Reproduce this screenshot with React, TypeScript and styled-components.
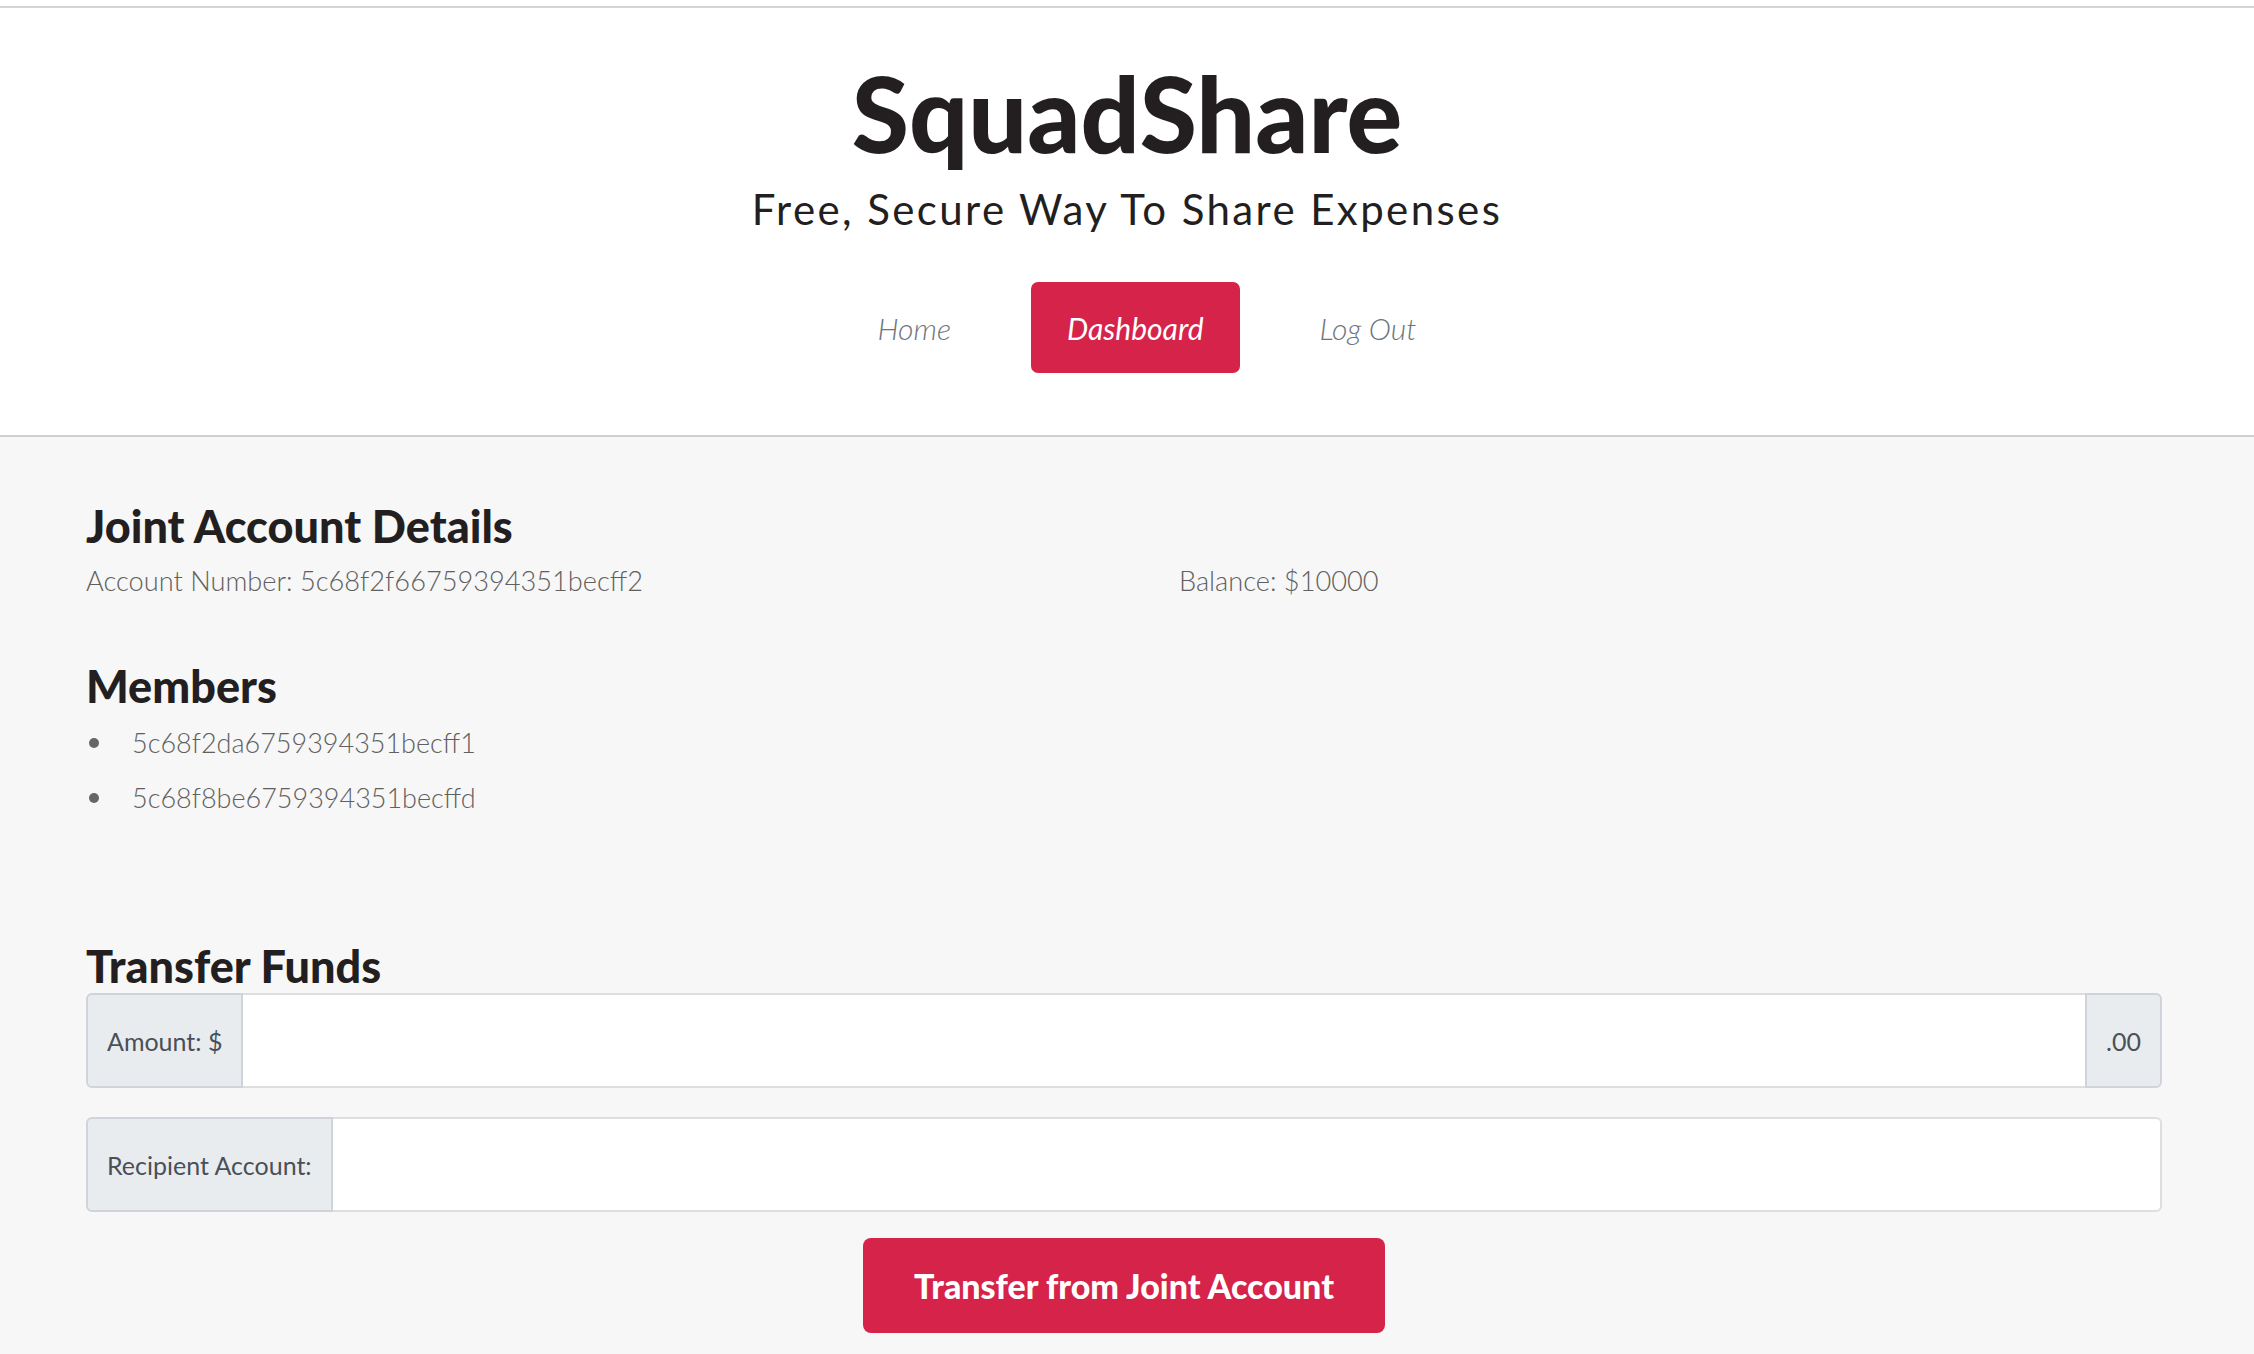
import React from 'react';
import styled, { createGlobalStyle } from 'styled-components';

const GlobalStyle = createGlobalStyle`
  html, body { margin: 0; padding: 0; }
  body {
    background: #ffffff;
    font-family: Lato, "Liberation Sans", sans-serif;
  }
  * { box-sizing: border-box; }
`;

const Page = styled.div`
  min-height: 100vh;
  display: flex;
  flex-direction: column;
  background: #ffffff;
  padding-top: 6px;
`;

const Header = styled.header`
  background: #ffffff;
  border-top: 2px solid #d4d4d4;
  border-bottom: 2px solid #cfcfcf;
  padding: 43px 0 62px;
  text-align: center;
`;

const Title = styled.h1`
  margin: 0;
  font-family: Lato, "Liberation Sans", sans-serif;
  font-weight: 900;
  font-size: 104px;
  line-height: 1.2;
  color: #231f20;
`;

const Tagline = styled.p`
  margin: 8px 0 0;
  font-family: Lato, "Liberation Sans", sans-serif;
  font-weight: 400;
  font-size: 42px;
  line-height: 1.2;
  letter-spacing: 2.4px;
  color: #231f20;
`;

const Nav = styled.nav`
  margin-top: 48px;
  display: flex;
  justify-content: center;
  padding-left: 40px;
`;

const NavItem = styled.a<{ $active?: boolean }>`
  height: 91px;
  margin: 0 22px;
  padding: 0 36px;
  display: flex;
  align-items: center;
  border-radius: 7px;
  font-family: Lato, "Liberation Sans", sans-serif;
  font-style: italic;
  font-size: 30px;
  font-weight: ${p => (p.$active ? 400 : 300)};
  color: ${p => (p.$active ? '#ffffff' : '#6c757d')};
  background: ${p => (p.$active ? '#d6234a' : 'transparent')};
  text-decoration: none;
  cursor: pointer;
`;

const Main = styled.main`
  flex: 1;
  background: #f7f7f7;
  padding: 62px 92px 40px 86px;
`;

const SectionTitle = styled.h2<{ $gap?: number }>`
  margin: ${p => p.$gap ?? 0}px 0 0;
  font-family: Lato, "Liberation Sans", sans-serif;
  font-weight: 900;
  font-size: 45px;
  line-height: 1.2;
  color: #231f20;
`;

const DetailsRow = styled.div`
  margin-top: 8px;
  display: grid;
  grid-template-columns: 1093px 1fr;
`;

const Detail = styled.div`
  font-family: Lato, "Liberation Sans", sans-serif;
  font-weight: 300;
  font-size: 27.2px;
  line-height: 39px;
  color: #606060;
`;

const MemberList = styled.ul`
  list-style: none;
  margin: 2px 0 0 3px;
  padding: 0;
`;

const MemberItem = styled.li`
  display: flex;
  align-items: center;
  font-family: Lato, "Liberation Sans", sans-serif;
  font-weight: 300;
  font-size: 27px;
  line-height: 55px;
  color: #606060;

  &::before {
    content: '';
    width: 10px;
    height: 10px;
    border-radius: 50%;
    background: #666666;
    margin-right: 33px;
    flex: none;
  }
`;

const InputGroup = styled.div<{ $gap: number }>`
  margin-top: ${p => p.$gap}px;
  height: 95px;
  display: flex;
`;

const Addon = styled.span<{ $side: 'left' | 'right' }>`
  display: flex;
  align-items: center;
  padding: 0 19px;
  background: #e9ecef;
  border: 2px solid #ced4da;
  border-radius: ${p => (p.$side === 'left' ? '6px 0 0 6px' : '0 6px 6px 0')};
  font-family: Lato, "Liberation Sans", sans-serif;
  font-weight: 400;
  font-size: 25px;
  color: #495057;
  white-space: nowrap;
`;

const Field = styled.input<{ $last?: boolean }>`
  flex: 1;
  min-width: 0;
  background: #ffffff;
  border: 2px solid #dedede;
  border-left: none;
  border-right: ${p => (p.$last ? '2px solid #dedede' : 'none')};
  border-radius: ${p => (p.$last ? '0 6px 6px 0' : '0')};
  outline: none;
  padding: 0 20px;
  font-family: Lato, "Liberation Sans", sans-serif;
  font-size: 26px;
`;

const SubmitButton = styled.button`
  display: block;
  margin: 26px auto 0;
  width: 522px;
  height: 95px;
  background: #d6234a;
  color: #ffffff;
  border: none;
  border-radius: 8px;
  font-family: Lato, "Liberation Sans", sans-serif;
  font-weight: 900;
  font-size: 34px;
  cursor: pointer;
`;

export default function App() {
  return (
    <>
      <GlobalStyle />
      <Page>
        <Header>
          <Title>SquadShare</Title>
          <Tagline>Free, Secure Way To Share Expenses</Tagline>
          <Nav>
            <NavItem>Home</NavItem>
            <NavItem $active>Dashboard</NavItem>
            <NavItem>Log Out</NavItem>
          </Nav>
        </Header>
        <Main>
          <SectionTitle>Joint Account Details</SectionTitle>
          <DetailsRow>
            <Detail>Account Number: 5c68f2f66759394351becff2</Detail>
            <Detail>Balance: $10000</Detail>
          </DetailsRow>
          <SectionTitle $gap={59}>Members</SectionTitle>
          <MemberList>
            <MemberItem>5c68f2da6759394351becff1</MemberItem>
            <MemberItem>5c68f8be6759394351becffd</MemberItem>
          </MemberList>
          <SectionTitle $gap={114}>Transfer Funds</SectionTitle>
          <InputGroup $gap={0}>
            <Addon $side="left">Amount: $</Addon>
            <Field type="text" />
            <Addon $side="right">.00</Addon>
          </InputGroup>
          <InputGroup $gap={29}>
            <Addon $side="left">Recipient Account:</Addon>
            <Field type="text" $last />
          </InputGroup>
          <SubmitButton>Transfer from Joint Account</SubmitButton>
        </Main>
      </Page>
    </>
  );
}
